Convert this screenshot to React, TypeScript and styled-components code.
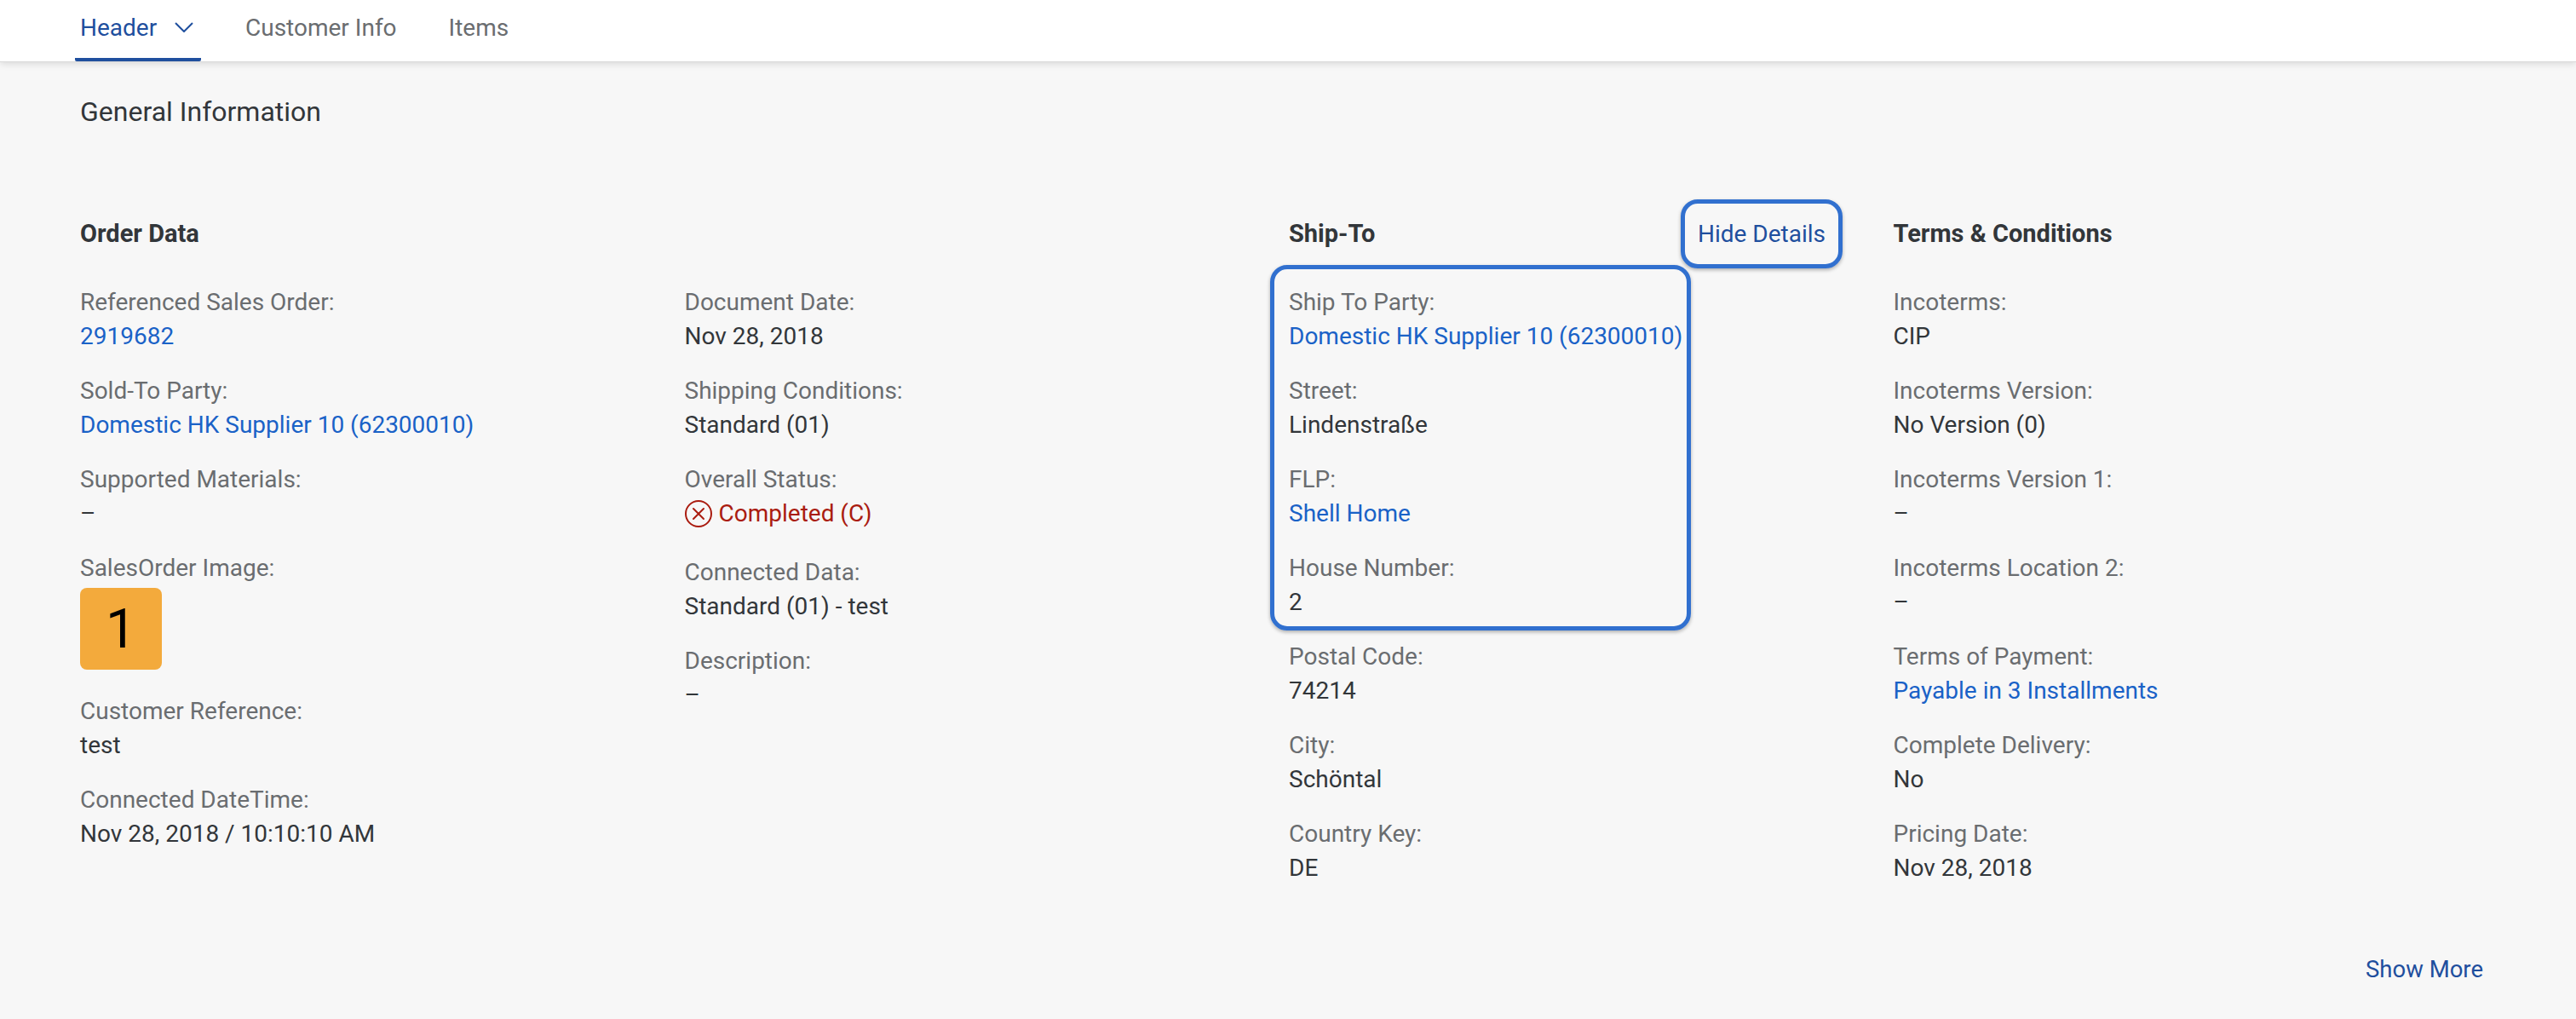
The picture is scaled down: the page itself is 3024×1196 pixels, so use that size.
import React from 'react';
import styled, { createGlobalStyle } from 'styled-components';

const GlobalStyle = createGlobalStyle`
  html, body {
    margin: 0;
    padding: 0;
    background: #f7f7f7;
  }
  body {
    font-family: Roboto, "Liberation Sans", sans-serif;
    font-size: 28px;
    color: #32363a;
  }
`;

type FieldData = {
  label: string;
  value: string;
  kind?: 'text' | 'link' | 'status' | 'tile';
};

const orderData: FieldData[] = [
  { label: 'Referenced Sales Order:', value: '2919682', kind: 'link' },
  { label: 'Sold-To Party:', value: 'Domestic HK Supplier 10 (62300010)', kind: 'link' },
  { label: 'Supported Materials:', value: '–' },
  { label: 'SalesOrder Image:', value: '1', kind: 'tile' },
  { label: 'Customer Reference:', value: 'test' },
  { label: 'Connected DateTime:', value: 'Nov 28, 2018 / 10:10:10 AM' },
];

const orderDataMore: FieldData[] = [
  { label: 'Document Date:', value: 'Nov 28, 2018' },
  { label: 'Shipping Conditions:', value: 'Standard (01)' },
  { label: 'Overall Status:', value: 'Completed (C)', kind: 'status' },
  { label: 'Connected Data:', value: 'Standard (01) - test' },
  { label: 'Description:', value: '–' },
];

const shipToFocused: FieldData[] = [
  { label: 'Ship To Party:', value: 'Domestic HK Supplier 10 (62300010)', kind: 'link' },
  { label: 'Street:', value: 'Lindenstraße' },
  { label: 'FLP:', value: 'Shell Home', kind: 'link' },
  { label: 'House Number:', value: '2' },
];

const shipToRest: FieldData[] = [
  { label: 'Postal Code:', value: '74214' },
  { label: 'City:', value: 'Schöntal' },
  { label: 'Country Key:', value: 'DE' },
];

const terms: FieldData[] = [
  { label: 'Incoterms:', value: 'CIP' },
  { label: 'Incoterms Version:', value: 'No Version (0)' },
  { label: 'Incoterms Version 1:', value: '–' },
  { label: 'Incoterms Location 2:', value: '–' },
  { label: 'Terms of Payment:', value: 'Payable in 3 Installments', kind: 'link' },
  { label: 'Complete Delivery:', value: 'No' },
  { label: 'Pricing Date:', value: 'Nov 28, 2018' },
];

const Field: React.FC<FieldData> = ({ label, value, kind = 'text' }) => (
  <FieldWrap>
    <Label>{label}</Label>
    {kind === 'text' && <Value>{value}</Value>}
    {kind === 'link' && <LinkValue>{value}</LinkValue>}
    {kind === 'tile' && <Tile>{value}</Tile>}
    {kind === 'status' && (
      <StatusValue>
        <StatusIcon width="32" height="32" viewBox="0 0 32 32" fill="none" stroke="#aa1c10" strokeWidth="2">
          <circle cx="16" cy="16" r="15" />
          <path d="M10 10 L22 22 M22 10 L10 22" strokeLinecap="round" />
        </StatusIcon>
        {value}
      </StatusValue>
    )}
  </FieldWrap>
);

const App: React.FC = () => {
  return (
    <Page>
      <GlobalStyle />
      <TabBar>
        <Tab $active $width={148}>
          Header
          <svg width="22" height="12" viewBox="0 0 22 12" fill="none" stroke="#1f4f9e" strokeWidth="2">
            <path d="M1 1 L11 11 L21 1" />
          </svg>
        </Tab>
        <Tab>Customer Info</Tab>
        <Tab>Items</Tab>
      </TabBar>

      <Content>
        <Title>General Information</Title>
        <Columns>
          <Column>
            <HeadingRow>
              <Heading>Order Data</Heading>
            </HeadingRow>
            {orderData.map((f) => (
              <Field key={f.label} {...f} />
            ))}
          </Column>
          <Column>
            <HeadingRow />
            {orderDataMore.map((f) => (
              <Field key={f.label} {...f} />
            ))}
          </Column>
          <Column>
            <HeadingRow>
              <Heading>Ship-To</Heading>
              <HideDetails>Hide Details</HideDetails>
            </HeadingRow>
            <FocusGroup>
              {shipToFocused.map((f) => (
                <Field key={f.label} {...f} />
              ))}
            </FocusGroup>
            {shipToRest.map((f) => (
              <Field key={f.label} {...f} />
            ))}
          </Column>
          <Column>
            <HeadingRow>
              <Heading>Terms &amp; Conditions</Heading>
            </HeadingRow>
            {terms.map((f) => (
              <Field key={f.label} {...f} />
            ))}
          </Column>
        </Columns>
        <Footer>
          <ShowMore>Show More</ShowMore>
        </Footer>
      </Content>
    </Page>
  );
};

export default App;

const Page = styled.div`
  min-height: 1196px;
  background: #f7f7f7;
  overflow: hidden;
`;

const TabBar = styled.div`
  display: flex;
  height: 72px;
  padding-left: 88px;
  gap: 46px;
  background: #fff;
  box-shadow: 0 1px 0 #d9d9d9, 0 3px 8px rgba(0, 0, 0, 0.12);
`;

const Tab = styled.div<{ $active?: boolean; $width?: number }>`
  display: flex;
  align-items: center;
  justify-content: space-between;
  box-sizing: border-box;
  height: 72px;
  padding: 0 9px 4px 6px;
  width: ${(p) => (p.$width ? `${p.$width}px` : 'auto')};
  font-size: 28px;
  color: ${(p) => (p.$active ? '#1f4f9e' : '#6a6d70')};
  border-bottom: 4px solid ${(p) => (p.$active ? '#1f4f9e' : 'transparent')};
  border-radius: 0 0 2px 2px;
`;

const Content = styled.div`
  padding: 35px 92px 0 94px;
`;

const Title = styled.div`
  font-size: 32px;
  line-height: 48px;
`;

const Columns = styled.div`
  display: grid;
  grid-template-columns: repeat(4, 709.5px);
  margin-top: 89px;
`;

const Column = styled.div`
  display: flex;
  flex-direction: column;
`;

const HeadingRow = styled.div`
  display: flex;
  align-items: center;
  justify-content: space-between;
  width: 650px;
  height: 60px;
  margin-bottom: 31px;
`;

const Heading = styled.div`
  font-size: 29px;
  font-weight: 700;
`;

const HideDetails = styled.div`
  display: flex;
  align-items: center;
  justify-content: center;
  box-sizing: border-box;
  flex: none;
  width: 190px;
  height: 81px;
  border: 5px solid #3170cf;
  border-radius: 20px;
  box-shadow: 0 2px 4px rgba(0, 0, 0, 0.3);
  color: #1f4f9e;
  font-size: 28px;
`;

const FocusGroup = styled.div`
  position: relative;
  width: 450px;

  &::after {
    content: '';
    position: absolute;
    top: -24px;
    bottom: 11px;
    left: -22px;
    right: -22px;
    border: 5px solid #3170cf;
    border-radius: 20px;
    box-shadow: 0 2px 4px rgba(0, 0, 0, 0.3);
    pointer-events: none;
  }
`;

const FieldWrap = styled.div`
  margin-bottom: 24px;
  white-space: nowrap;
`;

const Label = styled.div`
  font-size: 28px;
  line-height: 40px;
  color: #6a6d70;
`;

const Value = styled.div`
  font-size: 28px;
  line-height: 40px;
  color: #32363a;
`;

const LinkValue = styled(Value)`
  color: #1a62c7;
`;

const StatusValue = styled(Value)`
  display: flex;
  align-items: flex-start;
  gap: 8px;
  height: 45px;
  color: #aa1c10;
`;

const StatusIcon = styled.svg`
  margin-top: 4px;
`;

const Tile = styled.div`
  display: flex;
  align-items: center;
  justify-content: center;
  width: 96px;
  height: 96px;
  margin: 3px 0 5px;
  border-radius: 8px;
  background: #f3aa3c;
  color: #000;
  font-size: 64px;
`;

const Footer = styled.div`
  display: flex;
  justify-content: flex-end;
  margin-top: 55px;
`;

const ShowMore = styled.div`
  margin-right: 17px;
  font-size: 27.5px;
  line-height: 40px;
  color: #1f4f9e;
`;
